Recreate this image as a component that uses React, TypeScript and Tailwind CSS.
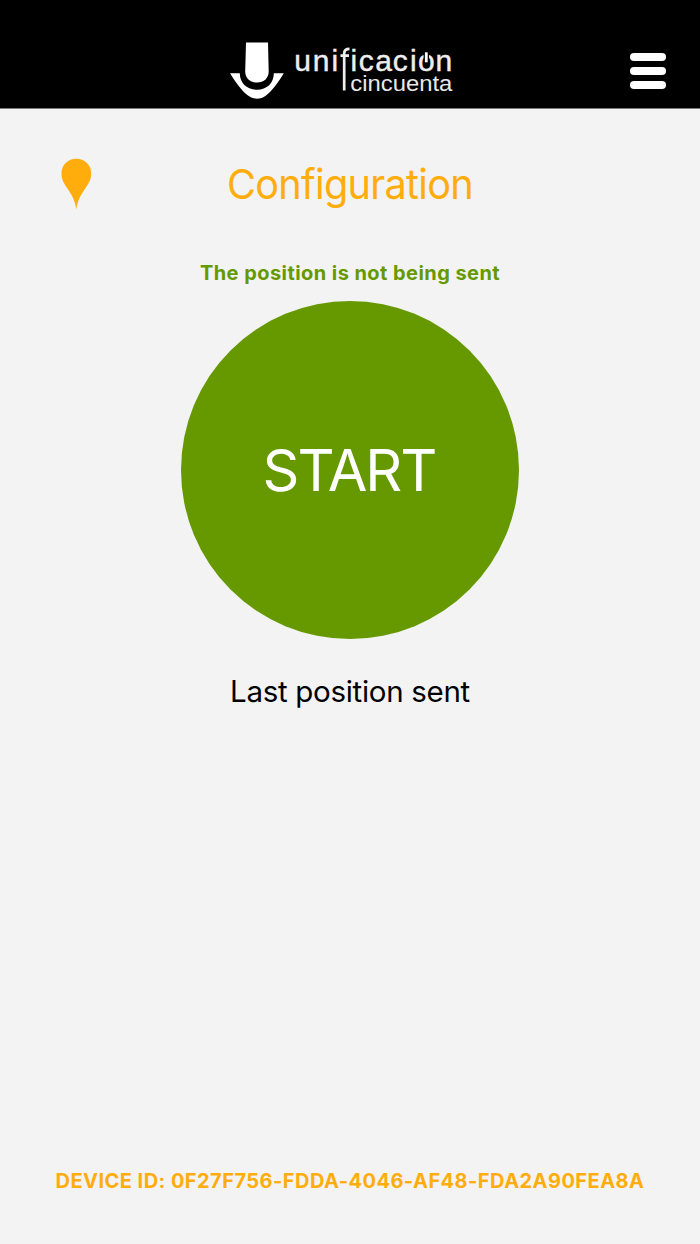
function Logo() {
  return (
    <svg
      className="h-[64px] w-[230px]"
      viewBox="226 38 230 64"
      fill="white"
      fontFamily="'Liberation Sans', sans-serif"
    >
      <path d="M246 42.5H268L268.7 71.5C268.7 78 264 82.5 257 82.5S245.2 78 245.2 71.5Z" />
      <path d="M230 73.2H239.8C239.8 83 247 89.7 257 89.7S273.8 83 273.8 73.2H283.8C278.5 82 272.5 90.5 266 95.5C260 99.8 254 99.8 248 95.5C241.3 90.5 235.5 82 230 73.2Z" />
      <g fill="#eeeeee" stroke="#eeeeee" strokeWidth="0.4">
        <text x="294.3 312.8 331.4" y="71.4" fontSize="30">uni</text>
        <text x="350.4 358.7 375.2 392.7 410 418 435.6" y="71.4" fontSize="30">icacion</text>
      </g>
      <path d="M340.5 55.7H349M344.2 90.5V53.5Q344.2 48.9 349.5 48.9" fill="none" stroke="#eeeeee" strokeWidth="2.7" />
      <path d="M426.3 51.5V61.5" stroke="black" strokeWidth="5.4" />
      <path d="M426.3 52.3V62.3" stroke="white" strokeWidth="2.8" />
      <text x="350.3" y="90.5" fontSize="21.5" fill="#e8e8e8" textLength="102" lengthAdjust="spacingAndGlyphs">
        cincuenta
      </text>
    </svg>
  );
}

export default function App() {
  return (
    <div className="flex h-[1244px] w-[700px] flex-col bg-[#f3f3f3] font-['Inter',sans-serif]">
      <header className="flex h-[109px] shrink-0 items-start justify-between border-b border-[#7d7979] bg-black pt-[38px] pr-[34px] pl-[226px]">
        <Logo />
        <button aria-label="Menu" className="mt-[15px] flex w-9 flex-col gap-[5.5px]">
          <span className="h-[8.3px] w-full rounded-full bg-white" />
          <span className="h-[8.3px] w-full rounded-full bg-white" />
          <span className="h-[8.3px] w-full rounded-full bg-white" />
        </button>
      </header>

      <main className="flex flex-1 flex-col items-center">
        <div className="grid h-[101px] w-full grid-cols-[100px_1fr_100px] pt-[49px]">
          <svg className="ml-[61px] h-[52px] w-[31px]" viewBox="61 158 31 52" fill="#ffad0d">
            <path d="M76.3 158.8C84.7 158.8 91.2 165 91.2 173.5C91.2 180 88.5 183.5 85 188.8C80 196.2 77.5 201 76.3 209.5C75.1 201 72.6 196.2 67.6 188.8C64.1 183.5 61.5 180 61.5 173.5C61.5 165 67.9 158.8 76.3 158.8Z" />
          </svg>
          <h1 className="h-[52px] scale-x-[0.966] text-center text-[41px] leading-[53px] tracking-[-0.7px] whitespace-nowrap text-[#ffad0d]">
            Configuration
          </h1>
        </div>

        <p className="mt-[47px] h-[30px] text-[20px] leading-[32px] font-bold tracking-[0.44px] text-[#669900]">
          The position is not being sent
        </p>
        <button className="mt-[14.4px] flex size-[338px] shrink-0 items-center justify-center rounded-full bg-[#669900] pr-[2px] text-[57.5px] tracking-[-2px] text-white">
          START
        </button>
        <p className="mt-[31.6px] text-[29.5px] leading-[40px] tracking-[-0.3px] text-black">Last position sent</p>
      </main>

      <footer className="h-[78px] text-center text-[20px] leading-[30px] font-bold tracking-[0.46px] whitespace-nowrap text-[#ffad0d]">
        DEVICE ID: 0F27F756-FDDA-4046-AF48-FDA2A90FEA8A
      </footer>
    </div>
  );
}
